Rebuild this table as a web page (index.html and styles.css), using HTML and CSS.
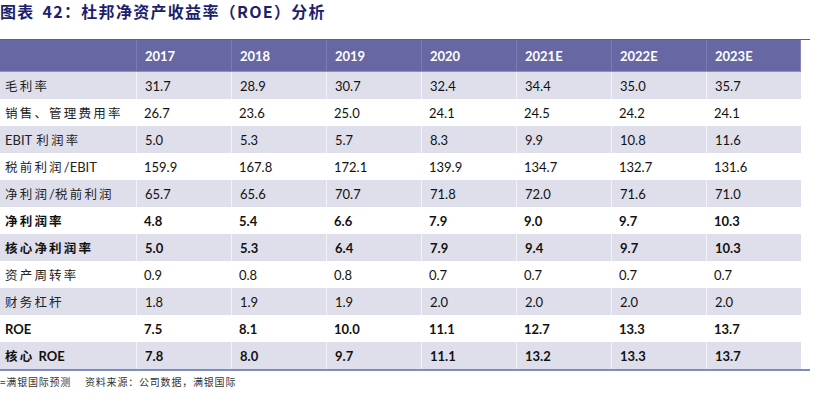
FILE: index.html
```html
<!DOCTYPE html>
<html lang="zh-CN">
<head>
<meta charset="utf-8">
<title>杜邦净资产收益率（ROE）分析</title>
<link rel="stylesheet" href="styles.css">
</head>
<body>
<div class="page">
  <h1 class="title">图表 42：杜邦净资产收益率（ROE）分析</h1>
  <div class="frame">
    <div class="table">
      <div class="row head">
        <div class="cell label"></div>
        <div class="cell">2017</div>
        <div class="cell">2018</div>
        <div class="cell">2019</div>
        <div class="cell">2020</div>
        <div class="cell">2021E</div>
        <div class="cell">2022E</div>
        <div class="cell">2023E</div>
      </div>
      <div class="row shade">
        <div class="cell label">毛利率</div>
        <div class="cell">31.7</div><div class="cell">28.9</div><div class="cell">30.7</div><div class="cell">32.4</div><div class="cell">34.4</div><div class="cell">35.0</div><div class="cell">35.7</div>
      </div>
      <div class="row">
        <div class="cell label">销售、管理费用率</div>
        <div class="cell">26.7</div><div class="cell">23.6</div><div class="cell">25.0</div><div class="cell">24.1</div><div class="cell">24.5</div><div class="cell">24.2</div><div class="cell">24.1</div>
      </div>
      <div class="row shade">
        <div class="cell label"><span class="lat gap">EBIT</span>利润率</div>
        <div class="cell">5.0</div><div class="cell">5.3</div><div class="cell">5.7</div><div class="cell">8.3</div><div class="cell">9.9</div><div class="cell">10.8</div><div class="cell">11.6</div>
      </div>
      <div class="row">
        <div class="cell label">税前利润<span class="lat">/EBIT</span></div>
        <div class="cell">159.9</div><div class="cell">167.8</div><div class="cell">172.1</div><div class="cell">139.9</div><div class="cell">134.7</div><div class="cell">132.7</div><div class="cell">131.6</div>
      </div>
      <div class="row shade">
        <div class="cell label">净利润<span class="lat">/</span>税前利润</div>
        <div class="cell">65.7</div><div class="cell">65.6</div><div class="cell">70.7</div><div class="cell">71.8</div><div class="cell">72.0</div><div class="cell">71.6</div><div class="cell">71.0</div>
      </div>
      <div class="row bold">
        <div class="cell label">净利润率</div>
        <div class="cell">4.8</div><div class="cell">5.4</div><div class="cell">6.6</div><div class="cell">7.9</div><div class="cell">9.0</div><div class="cell">9.7</div><div class="cell">10.3</div>
      </div>
      <div class="row shade bold">
        <div class="cell label">核心净利润率</div>
        <div class="cell">5.0</div><div class="cell">5.3</div><div class="cell">6.4</div><div class="cell">7.9</div><div class="cell">9.4</div><div class="cell">9.7</div><div class="cell">10.3</div>
      </div>
      <div class="row">
        <div class="cell label">资产周转率</div>
        <div class="cell">0.9</div><div class="cell">0.8</div><div class="cell">0.8</div><div class="cell">0.7</div><div class="cell">0.7</div><div class="cell">0.7</div><div class="cell">0.7</div>
      </div>
      <div class="row shade">
        <div class="cell label">财务杠杆</div>
        <div class="cell">1.8</div><div class="cell">1.9</div><div class="cell">1.9</div><div class="cell">2.0</div><div class="cell">2.0</div><div class="cell">2.0</div><div class="cell">2.0</div>
      </div>
      <div class="row bold">
        <div class="cell label"><span class="lat">ROE</span></div>
        <div class="cell">7.5</div><div class="cell">8.1</div><div class="cell">10.0</div><div class="cell">11.1</div><div class="cell">12.7</div><div class="cell">13.3</div><div class="cell">13.7</div>
      </div>
      <div class="row shade bold">
        <div class="cell label"><span class="gap">核心</span><span class="lat">ROE</span></div>
        <div class="cell">7.8</div><div class="cell">8.0</div><div class="cell">9.7</div><div class="cell">11.1</div><div class="cell">13.2</div><div class="cell">13.3</div><div class="cell">13.7</div>
      </div>
    </div>
  </div>
  <p class="source">=满银国际预测　 资料来源：公司数据，满银国际</p>
</div>
</body>
</html>
```

FILE: styles.css
```css
html, body {
  margin: 0;
  padding: 0;
  background: #ffffff;
}

.page {
  width: 826px;
}

.title {
  margin: 0;
  height: 39px;
  font-family: "Noto Sans CJK SC", "Noto Sans", sans-serif;
  font-size: 16px;
  font-weight: 700;
  line-height: 22px;
  letter-spacing: 1.3px;
  word-spacing: 3px;
  color: #1d1f6e;
}

.frame {
  width: 810px;
  border-top: 1px solid #5b5c9b;
  border-bottom: 2px solid #7e8cc1;
}

.table {
  width: 801px;
  display: flex;
  flex-direction: column;
}

.row {
  display: grid;
  grid-template-columns: 136px repeat(7, 95px);
  height: 27px;
  align-items: center;
  font-family: Lato, "Noto Sans CJK SC", sans-serif;
  font-size: 13px;
  color: #111111;
}

.row.shade {
  background: #dfdfeb;
}

.row.shade .cell + .cell {
  border-left: 1px solid #f2f2f8;
}

.row.head {
  height: 31px;
  background: #6667a3;
  border-bottom: 1px solid #8d8ec2;
  color: #ffffff;
  font-weight: 700;
  box-shadow: inset -1px 0 0 #8384b8;
}

.row.head .cell + .cell {
  border-left: 1px solid #7b7cb3;
}

.cell {
  height: 100%;
  display: flex;
  align-items: center;
  padding-left: 8px;
  box-sizing: border-box;
  white-space: nowrap;
}

.cell.label {
  padding-left: 5px;
  font-family: "Noto Sans CJK SC", sans-serif;
  font-size: 12.5px;
  letter-spacing: 2.2px;
  color: #222222;
}

.lat {
  font-family: Lato, sans-serif;
  font-size: 13px;
  letter-spacing: 0;
}

.gap {
  margin-right: 4px;
}

.row.bold {
  font-weight: 700;
}

.row.bold .cell.label {
  font-weight: 700;
  color: #111111;
}

.source {
  margin: 4px 0 0 0;
  font-family: "Noto Sans CJK SC", sans-serif;
  font-size: 10px;
  line-height: 14px;
  letter-spacing: 0.8px;
  color: #333333;
}
```
